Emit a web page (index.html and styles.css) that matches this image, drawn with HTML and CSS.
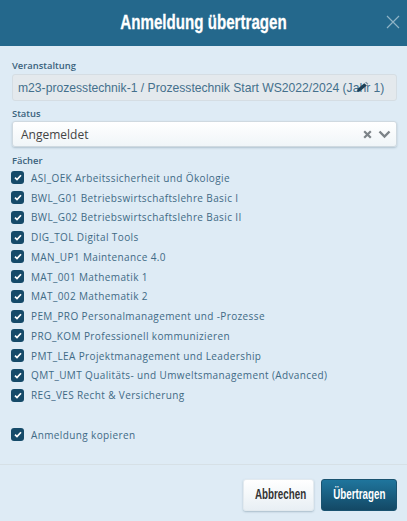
FILE: index.html
```html
<!DOCTYPE html>
<html lang="de">
<head>
    <meta charset="UTF-8">
    <title>Anmeldung übertragen</title>
    <link rel="stylesheet" href="styles.css">
</head>
<body>
    <div class="modal">
        <div class="modal-header">
            <h1>Anmeldung übertragen</h1>
            <svg class="close" width="14" height="14" viewBox="0 0 14 14"><path d="M1 1l12 12M13 1L1 13" stroke="#8fb3c6" stroke-width="1.2" fill="none"/></svg>
        </div>
        <div class="modal-body">
            <label class="field-label">Veranstaltung</label>
            <div class="input-readonly">
                <span>m23-prozesstechnik-1 / Prozesstechnik Start WS2022/2024 (Jahr 1)</span>
                <svg class="pencil" width="13" height="12" viewBox="0 0 12 11"><path d="M1 10l.6-2.8L7.6 2l2.4 2-6 5.2z" fill="#1c3f57"/><path d="M8.4 1.4l1-.8 2 1.8-.8 1z" fill="#7d93a3"/></svg>
            </div>
            <label class="field-label status-label">Status</label>
            <div class="select">
                <span class="select-value">Angemeldet</span>
                <svg width="9" height="9" viewBox="0 0 9 9"><path d="M1.2 1.2l6.6 6.6M7.8 1.2L1.2 7.8" stroke="#7c8388" stroke-width="2.2" fill="none"/></svg>
                <svg class="chevron" width="13" height="9" viewBox="0 0 13 9"><path d="M1.5 1.5l5 5 5-5" stroke="#7c8388" stroke-width="2.4" fill="none"/></svg>
            </div>
            <label class="field-label subjects-label">Fächer</label>
            <ul class="checks">
                <li><i class="box"><svg width="8" height="7" viewBox="0 0 8 7"><path d="M1 3.6l2 2L7 1.2" stroke="#fff" stroke-width="1.7" fill="none"/></svg></i>ASI_OEK Arbeitssicherheit und Ökologie</li>
                <li><i class="box"><svg width="8" height="7" viewBox="0 0 8 7"><path d="M1 3.6l2 2L7 1.2" stroke="#fff" stroke-width="1.7" fill="none"/></svg></i>BWL_G01 Betriebswirtschaftslehre Basic I</li>
                <li><i class="box"><svg width="8" height="7" viewBox="0 0 8 7"><path d="M1 3.6l2 2L7 1.2" stroke="#fff" stroke-width="1.7" fill="none"/></svg></i>BWL_G02 Betriebswirtschaftslehre Basic II</li>
                <li><i class="box"><svg width="8" height="7" viewBox="0 0 8 7"><path d="M1 3.6l2 2L7 1.2" stroke="#fff" stroke-width="1.7" fill="none"/></svg></i>DIG_TOL Digital Tools</li>
                <li><i class="box"><svg width="8" height="7" viewBox="0 0 8 7"><path d="M1 3.6l2 2L7 1.2" stroke="#fff" stroke-width="1.7" fill="none"/></svg></i>MAN_UP1 Maintenance 4.0</li>
                <li><i class="box"><svg width="8" height="7" viewBox="0 0 8 7"><path d="M1 3.6l2 2L7 1.2" stroke="#fff" stroke-width="1.7" fill="none"/></svg></i>MAT_001 Mathematik 1</li>
                <li><i class="box"><svg width="8" height="7" viewBox="0 0 8 7"><path d="M1 3.6l2 2L7 1.2" stroke="#fff" stroke-width="1.7" fill="none"/></svg></i>MAT_002 Mathematik 2</li>
                <li><i class="box"><svg width="8" height="7" viewBox="0 0 8 7"><path d="M1 3.6l2 2L7 1.2" stroke="#fff" stroke-width="1.7" fill="none"/></svg></i>PEM_PRO Personalmanagement und -Prozesse</li>
                <li><i class="box"><svg width="8" height="7" viewBox="0 0 8 7"><path d="M1 3.6l2 2L7 1.2" stroke="#fff" stroke-width="1.7" fill="none"/></svg></i>PRO_KOM Professionell kommunizieren</li>
                <li><i class="box"><svg width="8" height="7" viewBox="0 0 8 7"><path d="M1 3.6l2 2L7 1.2" stroke="#fff" stroke-width="1.7" fill="none"/></svg></i>PMT_LEA Projektmanagement und Leadership</li>
                <li><i class="box"><svg width="8" height="7" viewBox="0 0 8 7"><path d="M1 3.6l2 2L7 1.2" stroke="#fff" stroke-width="1.7" fill="none"/></svg></i>QMT_UMT Qualitäts- und Umweltsmanagement (Advanced)</li>
                <li><i class="box"><svg width="8" height="7" viewBox="0 0 8 7"><path d="M1 3.6l2 2L7 1.2" stroke="#fff" stroke-width="1.7" fill="none"/></svg></i>REG_VES Recht &amp; Versicherung</li>
            </ul>
            <div class="copy-row"><i class="box"><svg width="8" height="7" viewBox="0 0 8 7"><path d="M1 3.6l2 2L7 1.2" stroke="#fff" stroke-width="1.7" fill="none"/></svg></i>Anmeldung kopieren</div>
        </div>
        <div class="modal-footer">
            <button class="btn-cancel"><span>Abbrechen</span></button>
            <button class="btn-submit"><span>Übertragen</span></button>
        </div>
    </div>
</body>
</html>
```

FILE: styles.css
```css
html, body {
    margin: 0;
    padding: 0;
}

body {
    width: 407px;
    height: 521px;
    overflow: hidden;
    background: #deebf5;
    font-family: "Open Sans", sans-serif;
    color: #3f6a85;
}

.modal {
    display: flex;
    flex-direction: column;
    height: 521px;
}

.modal-header {
    flex: none;
    height: 46px;
    box-sizing: border-box;
    padding-bottom: 2px;
    background: #24688c;
    display: flex;
    align-items: center;
    justify-content: center;
    position: relative;
}

.modal-header h1 {
    margin: 0;
    font-family: "Liberation Sans", sans-serif;
    font-size: 21px;
    font-weight: bold;
    color: #fff;
    -webkit-text-stroke: 0.3px #fff;
    transform: scaleX(0.72);
    white-space: nowrap;
}

.close {
    position: absolute;
    right: 7px;
    top: 15px;
}

.modal-body {
    flex: 1;
    padding: 13px 10px 0 12px;
}

.field-label {
    display: block;
    font-size: 9.4px;
    line-height: 14px;
    font-weight: 600;
    color: #3a627c;
}

.input-readonly {
    height: 27px;
    margin-top: 1px;
    box-sizing: border-box;
    background: #e4e9ed;
    border: 1px solid #d5dde3;
    border-radius: 3px;
    display: flex;
    align-items: center;
    padding-left: 5px;
    font-family: "Liberation Sans", sans-serif;
    font-size: 12.15px;
    color: #44708c;
    white-space: nowrap;
    position: relative;
}

.pencil {
    position: absolute;
    left: 343px;
    top: 6px;
}

.status-label {
    margin-top: 6px;
}

.select {
    height: 26px;
    box-sizing: border-box;
    background: linear-gradient(#fff, #f0f5f8);
    border: 1px solid #cfd9e0;
    border-radius: 3px;
    box-shadow: 0 1px 2px rgba(70, 100, 120, 0.3);
    display: flex;
    align-items: center;
    padding: 0 5px 0 8px;
    font-size: 12px;
    color: #444;
}

.select-value {
    flex: 1;
}

.chevron {
    margin-left: 6px;
}

.subjects-label {
    margin-top: 7px;
}

.checks {
    list-style: none;
    margin: 0;
    padding: 0;
}

.checks li, .copy-row {
    display: flex;
    align-items: center;
    height: 19.75px;
    font-size: 10px;
    letter-spacing: 0.38px;
    white-space: nowrap;
}

.copy-row {
    margin-top: 20px;
}

.box {
    flex: none;
    width: 13px;
    height: 13px;
    margin-left: -1px;
    margin-right: 7px;
    background: #154a69;
    border-radius: 3px;
    display: flex;
    align-items: center;
    justify-content: center;
}

.modal-footer {
    flex: none;
    height: 57px;
    box-sizing: border-box;
    border-top: 1px solid #d6e0e6;
    padding: 14px 10px 0 0;
    display: flex;
    justify-content: flex-end;
    gap: 7px;
}

button {
    height: 32px;
    border-radius: 3px;
    font-family: "Liberation Sans", sans-serif;
    font-size: 14px;
    font-weight: bold;
    padding: 0 0 2px;
}

button span {
    display: inline-block;
    transform: scaleX(0.7);
    white-space: nowrap;
}

.btn-cancel {
    width: 71px;
    background: linear-gradient(#fff, #e8eff4);
    border: 1px solid #e3eaef;
    box-shadow: 0 1px 2px rgba(70, 100, 120, 0.35);
    color: #333;
}

.btn-submit {
    width: 76px;
    background: linear-gradient(#1f759d, #134865);
    border: 1px solid #1a5370;
    color: #fff;
}
```
